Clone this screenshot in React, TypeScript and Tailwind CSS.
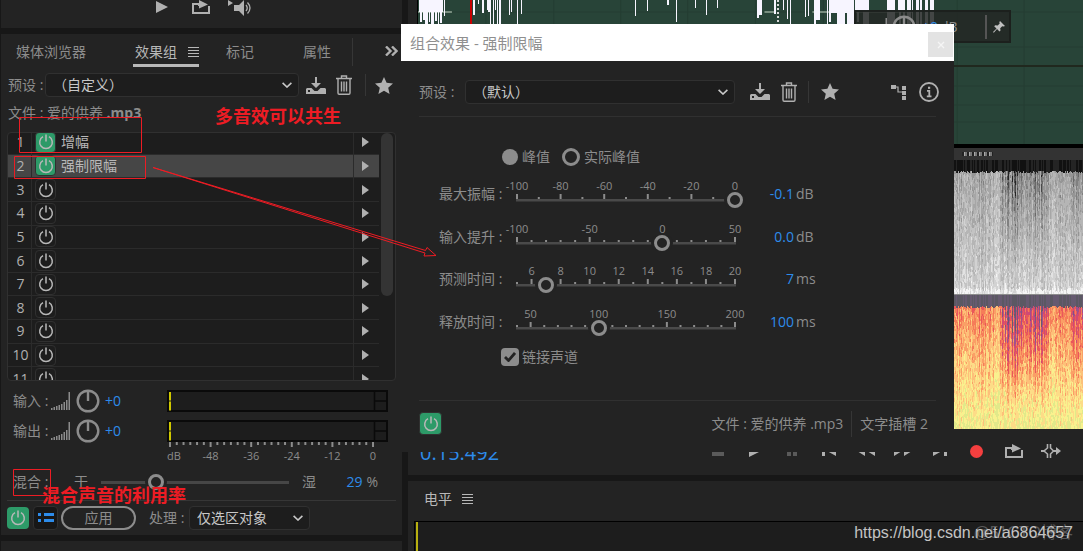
import type { ReactNode } from "react";
import clsx from "clsx";

const noise = (x: number, y: number) => {
  const n = Math.sin(x * 127.1 + y * 311.7) * 43758.5453;
  return n - Math.floor(n);
};

/* ---------- icons ---------- */

const PowerIcon = ({ className }: { className?: string }) => (
  <svg viewBox="0 0 16 16" className={clsx("size-4", className)} fill="none" stroke="currentColor" strokeWidth="1.5">
    <path d="M5 2.7a6.3 6.3 0 1 0 6 0" />
    <path d="M8 0.5v7" />
  </svg>
);

const MenuIcon = () => (
  <svg viewBox="0 0 11 10" className="w-[11px] h-2.5" stroke="currentColor" strokeWidth="1">
    <path d="M0 0.5h11M0 3.5h11M0 6.5h11M0 9.5h11" />
  </svg>
);

const ChevronIcon = () => (
  <svg viewBox="0 0 10 6" className="w-2.5 h-1.5 shrink-0 text-[#c8c8c8]" fill="none" stroke="currentColor" strokeWidth="1.6">
    <path d="M0.6 0.8 5 5 9.4 0.8" />
  </svg>
);

const SaveIcon = () => (
  <svg viewBox="0 0 20 17" className="w-5 h-[17px]" fill="currentColor">
    <path d="M9 0h2v6h4l-5 5-5-5h4z" />
    <path fillRule="evenodd" d="M1 11h4.500l3 3h3l3-3H19l1 1v5H0v-5zM2 13v2h2v-2z" />
  </svg>
);

const TrashIcon = () => (
  <svg viewBox="0 0 16 20" className="w-4 h-5" fill="none" stroke="currentColor" strokeWidth="1.4">
    <path d="M0 3.500h16M5.500 3V1h5v2M2 4v14q0 1.200 1.200 1.200h9.600q1.200 0 1.200-1.200V4" />
    <path d="M5.500 6.500v10M8 6.500v10M10.500 6.500v10" />
  </svg>
);

const StarIcon = () => (
  <svg viewBox="0 0 18 17" className="w-[18px] h-[17px]" fill="currentColor">
    <path d="m9 0 2.600 5.800 6.400.6-4.800 4.300 1.400 6.300L9 13.700 3.400 17l1.400-6.300L0 6.400l6.400-.6z" />
  </svg>
);

const RoutingIcon = () => (
  <svg viewBox="0 0 16 16" className="size-4" fill="currentColor">
    <path d="M0 1h5v4H0zM11 2h4v4h-4zM11 7h4v4h-4zM11 12h4v4h-4z" />
    <path d="M5 3h2v5h4M7 8h4" fill="none" stroke="currentColor" strokeWidth="1.200" />
  </svg>
);

const InfoIcon = () => (
  <svg viewBox="0 0 20 20" className="size-5" fill="none" stroke="currentColor" strokeWidth="1.800">
    <circle cx="10" cy="10" r="9" />
    <path d="M8 8.800h2.300v5M7.800 14.300h4.700" />
    <path d="M9 5.800h2.200" strokeWidth="2.200" />
  </svg>
);

const LoopIcon = () => (
  <svg viewBox="0 0 18 14" className="w-[18px] h-3.5" fill="currentColor">
    <path d="M6 4H1v9h16V6" fill="none" stroke="currentColor" strokeWidth="2" />
    <path d="M6 3h1V0l9 4.500L7 8.500V6H6z" />
  </svg>
);

const SpeakerIcon = () => (
  <svg viewBox="0 0 25 16" className="w-[25px] h-4" fill="currentColor">
    <path d="M0 0l5 3-5 3zM6 5h5l5-5v16l-5-5H6z" />
    <path d="M18 5q2.500 3 0 6M19.500 2.500q5 5.500 0 11" fill="none" stroke="currentColor" strokeWidth="1.300" />
  </svg>
);

const SkipIcon = () => (
  <svg viewBox="0 0 20 14" className="w-5 h-3.5" fill="currentColor">
    <path d="M6.500 0v4L3 7l3.500 3v4M9.500 0v4l3 3-3 3v4" fill="none" stroke="currentColor" strokeWidth="1.600" />
    <path d="M0 6h3v2H0zM12 6h3V3l5 4-5 4V8h-3z" />
  </svg>
);

const PinIcon = () => (
  <svg viewBox="0 0 12 12" className="size-3" fill="currentColor">
    <path d="M7 0l5 5-1.500.6-1.300-.4-2 2 .3 2.300-1 1L4 8 .8 11.700 0 11l3.500-3.500L1.200 5.200l1-1 2.500.2 2-2-.4-1.200z" />
  </svg>
);

const Bars = () => (
  <svg viewBox="0 0 20 18" className="w-5 h-[18px]" fill="currentColor">
    {[2, 3, 4, 5, 6, 8, 10, 18].map((h, i) => (
      <rect key={i} x={i * 2.5} y={18 - h} width="1.5" height={h} />
    ))}
  </svg>
);

const Knob = () => (
  <svg viewBox="0 0 24 24" className="size-6" fill="none" stroke="currentColor" strokeWidth="2.4">
    <circle cx="12" cy="12" r="10.300" />
    <path d="M12 2v10" />
  </svg>
);

/* ---------- small controls ---------- */

const Divider = ({ className }: { className?: string }) => (
  <span className={clsx("w-px bg-[#363636]", className)} />
);

const PowerButton = ({ on, label }: { on?: boolean; label: string }) => (
  <button
    aria-label={label}
    className={clsx(
      "flex size-[21px] shrink-0 items-center justify-center rounded-sm border border-[#303030] text-[#b8b8b8]",
      on && "bg-[#2d9a68]"
    )}
  >
    <PowerIcon />
  </button>
);

const Dropdown = ({ id, value, className }: { id: string; value: string; className?: string }) => (
  <span className={clsx("flex h-6 items-center rounded-sm border border-[#303030] bg-[#1d1d1d] pr-1.5", className)}>
    <select id={id} className="h-full min-w-0 flex-1 appearance-none bg-transparent pl-[7px] text-[#c8c8c8] outline-none">
      <option>{value}</option>
    </select>
    <ChevronIcon />
  </span>
);

const IconButton = ({ label, className, children }: { label: string; className?: string; children: ReactNode }) => (
  <button aria-label={label} className={clsx("shrink-0", className)}>
    {children}
  </button>
);

const rangeClass =
  "col-start-1 row-start-1 m-0 h-4 w-full appearance-none self-end bg-transparent outline-none [&::-webkit-slider-thumb]:size-4 [&::-webkit-slider-thumb]:appearance-none [&::-webkit-slider-thumb]:rounded-full [&::-webkit-slider-thumb]:border-[3px] [&::-webkit-slider-thumb]:border-[#8c8c8c] [&::-webkit-slider-thumb]:bg-[#232323] [&::-webkit-slider-thumb]:shadow-[3px_0_0_#232323,-3px_0_0_#232323]";

/* ---------- left side ---------- */

const tracks = ["增幅", "强制限幅", "", "", "", "", "", "", "", "", ""];

const EffectList = () => (
  <div className="mr-1.5 ml-1.5 mt-[9px] flex h-[249px] overflow-hidden rounded-sm border border-[#303030] bg-[#1d1d1d]">
    <ol className="-mt-0.5 flex h-[260px] flex-1 flex-col">
      {tracks.map((name, i) => (
        <li
          key={i}
          className={clsx("flex min-h-0 flex-1 items-center border-b border-[#2b2b2b]", i === 1 && "bg-[#464646]")}
        >
          <span className="w-[23px] pl-0.5 text-center text-[#b0b0b0]">{i + 1}</span>
          <span className="mr-[3px] h-full w-px bg-[#2b2b2b]" />
          <PowerButton on={i < 2} label={`电源 ${i + 1}`} />
          <span className="ml-[5px] flex-1 text-[#b8b8b8]">{name}</span>
          <span className="h-full w-px bg-[#2b2b2b]" />
          <button aria-label={`插槽 ${i + 1}`} className="flex w-[25px] justify-center pr-0.5 text-[#b0b0b0]">
            <svg viewBox="0 0 7 10" className="w-[7px] h-2.5" fill="currentColor">
              <path d="M0 0l7 5-7 5z" />
            </svg>
          </button>
        </li>
      ))}
    </ol>
    <span className="mr-0.5 ml-0.5 h-[163px] w-3 rounded-full bg-[#343434]" />
  </div>
);

const Meter = () => (
  <svg viewBox="0 0 221 22" className="h-[22px] w-[221px]">
    <rect x="1" y="1" width="219" height="20" fill="#1d1d1d" stroke="#0a0a0a" strokeWidth="2" />
    <path d="M207.500 1v20M208 11h12" stroke="#0a0a0a" strokeWidth="1.500" />
    <path d="M3 2v8.500M3 11.500v9" stroke="#cfc800" strokeWidth="2" />
  </svg>
);

const LevelRow = ({ label }: { label: string }) => (
  <div className="flex h-[30px] items-center pl-3">
    <span className="w-[38px]">{label} :</span>
    <Bars />
    <span className="ml-[5px] text-[#8c8c8c]"><Knob /></span>
    <span className="ml-[5px] flex-1 text-[#2d8ceb]">+0</span>
    <span className="mr-3.5"><Meter /></span>
  </div>
);

const MeterScale = () => (
  <svg viewBox="0 0 235 20" className="-mt-1 mr-0 ml-auto h-5 w-[235px]" fill="#8c8c8c" fontSize="11">
    {Array.from({ length: 31 }, (_, i) => (
      <rect key={i} x={2 + i * 6.767} y="0" width="2" height={i % 6 === 0 ? 5 : 3} />
    ))}
    {["dB", "-48", "-36", "-24", "-12", "0"].map((text, i) => (
      <text key={text} x={i === 0 ? 7 : 3 + i * 40.6} y="18" textAnchor="middle">{text}</text>
    ))}
  </svg>
);

const tabClass = "flex h-[33px] items-center border-b-[3px] border-transparent pt-1.5";

const EffectsRack = () => (
  <section className="ml-px bg-[#232323] pb-[5px]">
    <nav className="flex h-9 items-start pl-[15px]">
      <button className={tabClass}>媒体浏览器</button>
      <button className="ml-[47px] flex h-[33px] w-[66px] items-center justify-between border-b-[3px] border-[#b8b8b8] pt-1.5 pl-0.5 text-[#b8b8b8]">
        效果组 <MenuIcon />
      </button>
      <button className={clsx(tabClass, "ml-[27px]")}>标记</button>
      <button className={clsx(tabClass, "ml-[49px]")}>属性</button>
      <Divider className="mt-1 ml-[21px] h-7" />
      <IconButton label="更多" className="mt-3 mr-1 ml-auto text-[#b0b0b0]">
        <svg viewBox="0 0 13 10" className="w-[13px] h-2.5" fill="none" stroke="currentColor" strokeWidth="2.4">
          <path d="M1 0.500 5.500 5 1 9.500M7 0.500 11.500 5 7 9.500" />
        </svg>
      </IconButton>
    </nav>

    <div className="mt-[3px] flex h-6 items-center pl-[7px] text-[#b0b0b0]">
      <label htmlFor="rack-preset" className="w-[37px] text-[#8c8c8c]">预设 :</label>
      <Dropdown id="rack-preset" value="（自定义）" className="flex-1" />
      <IconButton label="保存预设" className="ml-[7px]"><SaveIcon /></IconButton>
      <IconButton label="删除预设" className="ml-2.5"><TrashIcon /></IconButton>
      <Divider className="ml-[13px] h-[22px]" />
      <IconButton label="收藏" className="mr-[9px] ml-[9px]"><StarIcon /></IconButton>
    </div>

    <p className="mt-1.5 h-5 pl-[7px] leading-5">
      文件 : 爱的供养 <strong className="font-bold">.mp3</strong>
    </p>

    <EffectList />

    <div className="mt-[5px]">
      <LevelRow label="输入" />
      <LevelRow label="输出" />
      <MeterScale />
    </div>

    <div className="mt-2 flex h-6 items-center pl-3">
      <label htmlFor="mix" className="w-[61px]">混合 :</label>
      <span>干</span>
      <span className="ml-[5px] grid w-[204px] items-center">
        <span className="col-start-1 row-start-1 mx-2 h-[3px] bg-[#464646]" />
        <input id="mix" type="range" min={0} max={100} defaultValue={29} className={rangeClass} />
      </span>
      <span className="ml-[5px]">湿</span>
      <span className="mr-1 ml-auto text-[#2d8ceb]">29</span>
      <span className="mr-6">%</span>
    </div>

    <hr className="mx-1.5 mt-1.5 border-[#363636]" />

    <div className="mt-1 flex h-[25px] items-center pl-1.5">
      <button aria-label="效果组电源" className="flex size-[22px] items-center justify-center rounded-sm bg-[#2d9a68] text-[#b8b8b8]">
        <PowerIcon />
      </button>
      <button aria-label="列表" className="ml-1 flex h-6 w-[25px] items-center justify-center rounded-sm border border-[#303030] bg-[#171717] text-[#2d8ceb]">
        <svg viewBox="0 0 16 11" className="w-4 h-[11px]" fill="currentColor">
          <path d="M0 1h3v3H0zM6 1h10v3H6zM0 7h3v3H0zM6 7h10v3H6z" />
        </svg>
      </button>
      <button className="ml-[3px] h-6 w-[75px] rounded-full border-2 border-[#8c8c8c] leading-5">应用</button>
      <label htmlFor="process" className="ml-[13px] w-10">处理 :</label>
      <Dropdown id="process" value="仅选区对象" className="w-[121px]" />
    </div>
  </section>
);

/* ---------- editor on the right ---------- */

// x, width, bottom of each visible peak
const peaks = [
  [10, 24, 12], [11, 2, 22], [14, 2, 20], [16, 3, 24], [20, 1, 22], [22, 3, 24], [26, 2, 21], [29, 1, 24], [31, 2, 23],
  [35, 1, 16], [64, 2, 15], [69, 1, 4], [73, 2, 13], [78, 1, 10], [79, 2, 12], [81, 1, 24], [84, 1, 24], [86, 1, 10],
  [88, 1, 24], [90, 2, 24], [100, 1, 15], [102, 1, 12], [108, 1, 24], [112, 1, 14], [226, 1, 16], [238, 1, 11],
  [258, 2, 5], [267, 1, 22], [286, 1, 8], [297, 1, 15], [308, 1, 8], [349, 2, 18], [351, 3, 15], [366, 2, 14],
  [375, 1, 10], [379, 1, 19], [382, 1, 24], [397, 1, 17], [400, 1, 16], [406, 2, 24], [408, 4, 20], [419, 1, 24],
  [421, 2, 22], [423, 16, 13], [429, 8, 24], [439, 7, 24], [447, 9, 11], [449, 2, 22], [455, 6, 24], [479, 8, 24],
  [490, 5, 12], [491, 2, 24], [495, 2, 24], [499, 4, 24], [504, 1, 20], [508, 3, 24], [512, 2, 24], [517, 3, 24],
  [522, 4, 24],
];

const Waveform = () => (
  <svg viewBox="0 0 666 144" preserveAspectRatio="none" className="h-36 w-full bg-[#284438]" shapeRendering="crispEdges">
    <path d="M0 12h666M0 47h666M0 86h666M0 105h666M0 122h666M68 0v144M136 0v144M203 0v144M270 0v144M338 0v144M406 0v144M471 0v144M540 0v144M607 0v144" stroke="#243d32" />
    <path d="M0 12h34M347 12h10M395 12h100" stroke="#cbdccb" />
    <path d="M0 66h666" stroke="#20281e" strokeWidth="2" />
    {peaks.map(([x, w, bottom]) => (
      <rect key={x} x={x - 9} y="0" width={w} height={bottom} fill="#f7f5ff" />
    ))}
    <path d="M360.500 0v24" stroke="#d8d8d8" strokeWidth="2" strokeDasharray="2 2" />
    <path d="M53 0v24" stroke="#c80000" strokeWidth="2" />
  </svg>
);

const grays = ["#111111", "#242424", "#4a4a4a", "#686868", "#808080", "#959595", "#a6a6a6", "#b5b5b5", "#c3c3c3", "#d2d2d2", "#e2e2e2", "#f5f5f5"];
const heat = ["#5b5863", "#665a70", "#805287", "#a0508c", "#cf4a74", "#e9575b", "#f57c59", "#fa9f66", "#fdc079", "#fddc87", "#f9f18e", "#e1e98a"];

const cells = (shade: (x: number, t: number) => number) => {
  const paths = grays.map(() => "");
  for (let x = 0; x < 130; x++) {
    let y = 11 + Math.floor(noise(x, 0.3) * 3);
    paths[noise(x, 4.1) > 0.5 ? 1 : 0] += `M${x + 0.5} 0v${y}`;
    while (y < 134) {
      const h = 2 + Math.floor(noise(x, y) * 3);
      const level = Math.round(shade(x, y / 134) + (noise(x, y + 0.5) - 0.5) * 2.4 + (noise(x, 7.7) - 0.5) * 2);
      paths[Math.max(1, Math.min(11, level))] += `M${x + 0.5} ${y}v${Math.min(h, 134 - y)}`;
      y += h;
    }
  }
  return paths;
};

// the quiet stretch in the middle and near the right edge
const dip = (x: number, t: number) => {
  const depth = x > 48 && x < 94 ? 5 : x > 118 ? 3 : 0.4;
  return depth * Math.max(0, 1 - t * 1.1) * (0.3 + noise(x, 2.2));
};

const grayCells = cells((x, t) => 6 + t * 3 - dip(x, t) * 0.7 + (t > 0.95 ? 1.5 : 0));
const heatCells = cells((x, t) => 6.2 + t * 4.2 - dip(x, t));

const Spectrogram = ({ data, palette }: { data: string[]; palette: string[] }) => (
  <svg viewBox="0 0 130 134" className="ml-auto block h-[134px] w-[130px]" shapeRendering="crispEdges">
    {data.map((d, i) => (
      <path key={i} d={d} stroke={palette[i]} strokeWidth="1" />
    ))}
  </svg>
);

const Hud = () => (
  <div className="absolute top-2.5 right-[72px] flex h-[33px] w-[157px] items-center border-2 border-[#1c1f1d]/90 bg-[#232725]/85 text-[#8c8c8c]">
    <span className="ml-3"><Bars /></span>
    <span className="ml-1"><Knob /></span>
    <span className="ml-1.5 text-[#2d8ceb]">+0</span>
    <span className="ml-0.5">dB</span>
    <span className="mr-1.5 ml-auto h-6 w-0.5 bg-[#555]" />
    <span className="mr-1 text-[#c0c0c0]"><PinIcon /></span>
  </div>
);

const transport: [string, ReactNode][] = [
  ["停止", <svg viewBox="0 0 12 10" className="w-3 h-2.5 text-[#5a5a5a]" fill="currentColor"><path d="M0 0h12v10H0z" /></svg>],
  ["播放", <svg viewBox="0 0 12 12" className="size-3" fill="currentColor"><path d="M0 0l12 6-12 6z" /></svg>],
  ["暂停", <svg viewBox="0 0 10 10" className="size-2.5 text-[#5a5a5a]" fill="currentColor"><path d="M0 0h4v10H0zM6 0h4v10H6z" /></svg>],
  ["上一个", <svg viewBox="0 0 14 10" className="w-3.5 h-2.5" fill="currentColor"><path d="M0 0h3v10H0zM14 0v10L5 5z" /></svg>],
  ["快退", <svg viewBox="0 0 18 10" className="w-[18px] h-2.5" fill="currentColor"><path d="M8 0v10L0 5zM18 0v10l-8-5z" /></svg>],
  ["快进", <svg viewBox="0 0 18 10" className="w-[18px] h-2.5" fill="currentColor"><path d="M0 0v10l8-5zM10 0v10l8-5z" /></svg>],
  ["下一个", <svg viewBox="0 0 14 10" className="w-3.5 h-2.5" fill="currentColor"><path d="M11 0h3v10h-3zM0 0v10l9-5z" /></svg>],
  ["录制", <span className="size-[13px] rounded-full bg-[#f43f3f]" />],
  ["循环", <LoopIcon />],
  ["跳过", <SkipIcon />],
];

const Editor = () => (
  <main className="flex min-w-0 flex-1 flex-col">
    <section className="relative bg-[#232323] pl-[9px]">
      <div className="border-l border-black bg-black">
        <Waveform />
        <div className="mt-1 flex h-3 items-center justify-end bg-[#333] pr-[90px]">
          <span className="h-1 w-[31px] bg-[repeating-linear-gradient(90deg,#222_0_2px,#aaa_2px_3px,#777_3px_5px)]" />
        </div>
        <Spectrogram data={grayCells} palette={grays} />
        <div className="h-px bg-[#8c8c8c]" />
        <Spectrogram data={heatCells} palette={heat} />
      </div>
      <Hud />
    </section>

    <section className="flex h-[46px] items-center bg-[#232323] pr-[14px] pb-0.5 pl-3 text-[#b0b0b0]">
      <span className="pt-1 text-xl text-[#2d8ceb]">0:15.492</span>
      <div className="ml-auto flex">
        {transport.map(([label, icon]) => (
          <button key={label} aria-label={label} className="flex w-[37px] items-center justify-center">
            {icon}
          </button>
        ))}
      </div>
    </section>

    <section className="mt-1.5 flex flex-1 flex-col bg-[#232323]">
      <h2 className="mt-2 flex h-5 items-center gap-2.5 pl-4 text-[#b8b8b8]">
        电平 <MenuIcon />
      </h2>
      <div className="mt-3 ml-1.5 min-h-[30px] flex-1 border-t border-l border-black bg-[#1d1d1d]">
        <span className="ml-px block h-full min-h-[30px] w-0.5 bg-[#b8b010]" />
      </div>
    </section>
  </main>
);

/* ---------- limiter window ---------- */

type SliderProps = {
  id: string;
  label: string;
  min: number;
  max: number;
  step: number;
  major: number[];
  value: number;
  shown: string;
  unit: string;
};

const sliders: SliderProps[] = [
  { id: "amp", label: "最大振幅", min: -100, max: 0, step: 10, major: [-100, -80, -60, -40, -20, 0], value: -0.1, shown: "-0.1", unit: "dB" },
  { id: "boost", label: "输入提升", min: -100, max: 50, step: 10, major: [-100, -50, 0, 50], value: 0, shown: "0.0", unit: "dB" },
  { id: "ahead", label: "预测时间", min: 5, max: 20, step: 1, major: [6, 8, 10, 12, 14, 16, 18, 20], value: 7, shown: "7", unit: "ms" },
  { id: "release", label: "释放时间", min: 40, max: 200, step: 10, major: [50, 100, 150, 200], value: 100, shown: "100", unit: "ms" },
];

const ScaleSlider = ({ id, label, min, max, step, major, value, shown, unit }: SliderProps) => {
  const at = (v: number) => 8 + ((v - min) / (max - min)) * 218;
  const ticks = Array.from({ length: (max - min) / step + 1 }, (_, i) => min + i * step);
  return (
    <div className="flex min-h-0 flex-1 items-center">
      <label htmlFor={id} className="w-[70px]">{label} :</label>
      <span className="mb-0.5 grid w-[234px]">
        <svg viewBox="0 0 234 30" className="col-start-1 row-start-1 h-[30px] w-[234px] overflow-visible" fill="#8c8c8c" fontSize="11">
          <rect x="7" y="21" width="220" height="2.500" fill="#4a4a4a" />
          {ticks.map((v) => {
            const big = major.includes(v);
            return <rect key={v} x={at(v) - 1} y={big ? 16 : 19} width="2" height={big ? 5 : 2} />;
          })}
          {major.map((v) => (
            <text key={v} x={at(v)} y="12" textAnchor="middle">{v}</text>
          ))}
        </svg>
        <input id={id} type="range" min={min} max={max} step="any" defaultValue={value} className={rangeClass} />
      </span>
      <span className="w-[51px] text-right text-[#2d8ceb]">{shown}</span>
      <span className="ml-0.5">{unit}</span>
    </div>
  );
};

const LimiterWindow = () => (
  <div role="dialog" aria-label="组合效果 - 强制限幅" className="absolute top-6 left-[401px] w-[553px] bg-[#232323]">
    <header className="flex h-[37px] items-center bg-white pr-px pl-[9px]">
      <h1 className="flex-1 text-[15px] text-[#8f8f8f]">组合效果 - 强制限幅</h1>
      <button aria-label="关闭" className="mt-1 flex size-[25px] items-center justify-center bg-[#e3e3e3] text-[#f5f5f5]">
        <svg viewBox="0 0 8 8" className="size-2" stroke="currentColor" strokeWidth="1.400">
          <path d="M1 1l6 6M7 1 1 7" />
        </svg>
      </button>
    </header>

    <div className="mr-[18px] ml-[18px] flex h-14 items-center border-b border-[#303030] pt-1.5 text-[#b0b0b0]">
      <label htmlFor="limiter-preset" className="w-[46px] text-[#8c8c8c]">预设 :</label>
      <Dropdown id="limiter-preset" value="（默认）" className="w-[270px]" />
      <IconButton label="保存预设" className="ml-[15px]"><SaveIcon /></IconButton>
      <IconButton label="删除预设" className="ml-[11px]"><TrashIcon /></IconButton>
      <Divider className="ml-[11px] h-[22px]" />
      <IconButton label="收藏" className="ml-3"><StarIcon /></IconButton>
      <IconButton label="通道路由" className="ml-auto"><RoutingIcon /></IconButton>
      <IconButton label="信息" className="ml-3 -mr-[3px]"><InfoIcon /></IconButton>
    </div>

    <fieldset className="mt-7 flex h-6 items-center pl-[101px]">
      <input id="peak" type="radio" name="mode" defaultChecked className="size-4 appearance-none rounded-full bg-[#8c8c8c]" />
      <label htmlFor="peak" className="ml-1">峰值</label>
      <input id="true-peak" type="radio" name="mode" className="ml-3 size-[18px] appearance-none rounded-full border-[3px] border-[#8c8c8c]" />
      <label htmlFor="true-peak" className="ml-1">实际峰值</label>
    </fieldset>

    <div className="mt-1 flex h-[170px] flex-col pl-[38px]">
      {sliders.map((s) => (
        <ScaleSlider key={s.id} {...s} />
      ))}
    </div>

    <label className="mt-0.5 flex h-6 items-center pl-[100px]">
      <span className="grid size-[18px] place-items-center rounded-sm bg-[#8c8c8c]">
        <input type="checkbox" defaultChecked className="col-start-1 row-start-1 size-[18px] appearance-none" />
        <svg viewBox="0 0 12 10" className="col-start-1 row-start-1 w-3 h-2.5" fill="none" stroke="#232323" strokeWidth="2.800">
          <path d="M1 5l3.500 3.500L11 1" />
        </svg>
      </span>
      <span className="ml-[3px]">链接声道</span>
    </label>

    <footer className="mx-[18px] mt-[31px] flex h-[52px] items-center border-t border-[#303030] pb-1.5">
      <button aria-label="效果电源" className="flex size-[23px] items-center justify-center rounded-sm border border-[#303030] bg-[#2d9a68] text-[#b8b8b8]">
        <PowerIcon />
      </button>
      <span className="ml-auto">文件 : 爱的供养 .mp3</span>
      <Divider className="mx-2 h-[26px]" />
      <span className="mr-2">文字插槽 2</span>
    </footer>
  </div>
);

/* ---------- red notes drawn over the windows ---------- */

const Notes = () => (
  <>
    <svg viewBox="0 0 460 551" className="pointer-events-none absolute top-0 left-0 h-[551px] w-[460px]" fill="none" stroke="#ed1c24">
      <path d="M19.500 117.500h122v35h-122zM14.500 156.500h131v22h-131zM13.500 469.500h37v26h-37z" />
      <path d="M153 167.500 425.500 250.500l1.500-3 9 8-12 .5 1-3z" />
    </svg>
    <p className="absolute top-[105px] left-[215px] font-['Liberation_Serif','Noto_Sans_CJK_SC',serif] text-lg leading-6 font-bold text-[#ed1c24]">多音效可以共生</p>
    <p className="absolute top-[484px] left-[42px] font-['Liberation_Serif','Noto_Sans_CJK_SC',serif] text-lg leading-6 font-bold text-[#ed1c24]">混合声音的利用率</p>
  </>
);

export default function App() {
  return (
    <div className="relative flex min-h-screen gap-1.5 overflow-hidden bg-[#171717] font-['Open_Sans','Noto_Sans_CJK_SC',sans-serif] text-sm leading-5 text-[#8c8c8c]">
      <aside className="flex w-[402px] shrink-0 flex-col">
        <div className="ml-px flex h-7 bg-[#232323] pl-[155px] text-[#b0b0b0]">
          <IconButton label="播放" className="h-3.5 w-9">
            <svg viewBox="0 0 12 12" className="size-3" fill="currentColor"><path d="M0 0l12 6-12 6z" /></svg>
          </IconButton>
          <IconButton label="循环" className="h-3.5 w-9"><LoopIcon /></IconButton>
          <IconButton label="自动播放" className="h-4"><SpeakerIcon /></IconButton>
        </div>
        <div className="h-1.5" />
        <EffectsRack />
        <div className="mt-1.5 ml-px min-h-2.5 flex-1 bg-[#232323]" />
      </aside>
      <Editor />
      <LimiterWindow />
      <Notes />
      <span className="absolute right-2.5 bottom-[7px] font-['Liberation_Sans','Noto_Sans_CJK_SC',sans-serif] text-base leading-6 text-[#585858]">@51CTO博客</span>
      <a href="https://blog.csdn.net/a6864657" className="absolute right-2.5 bottom-[7px] font-['Liberation_Sans',sans-serif] text-base leading-6 text-[#c4c4c4]">
        https://blog.csdn.net/a6864657
      </a>
    </div>
  );
}
